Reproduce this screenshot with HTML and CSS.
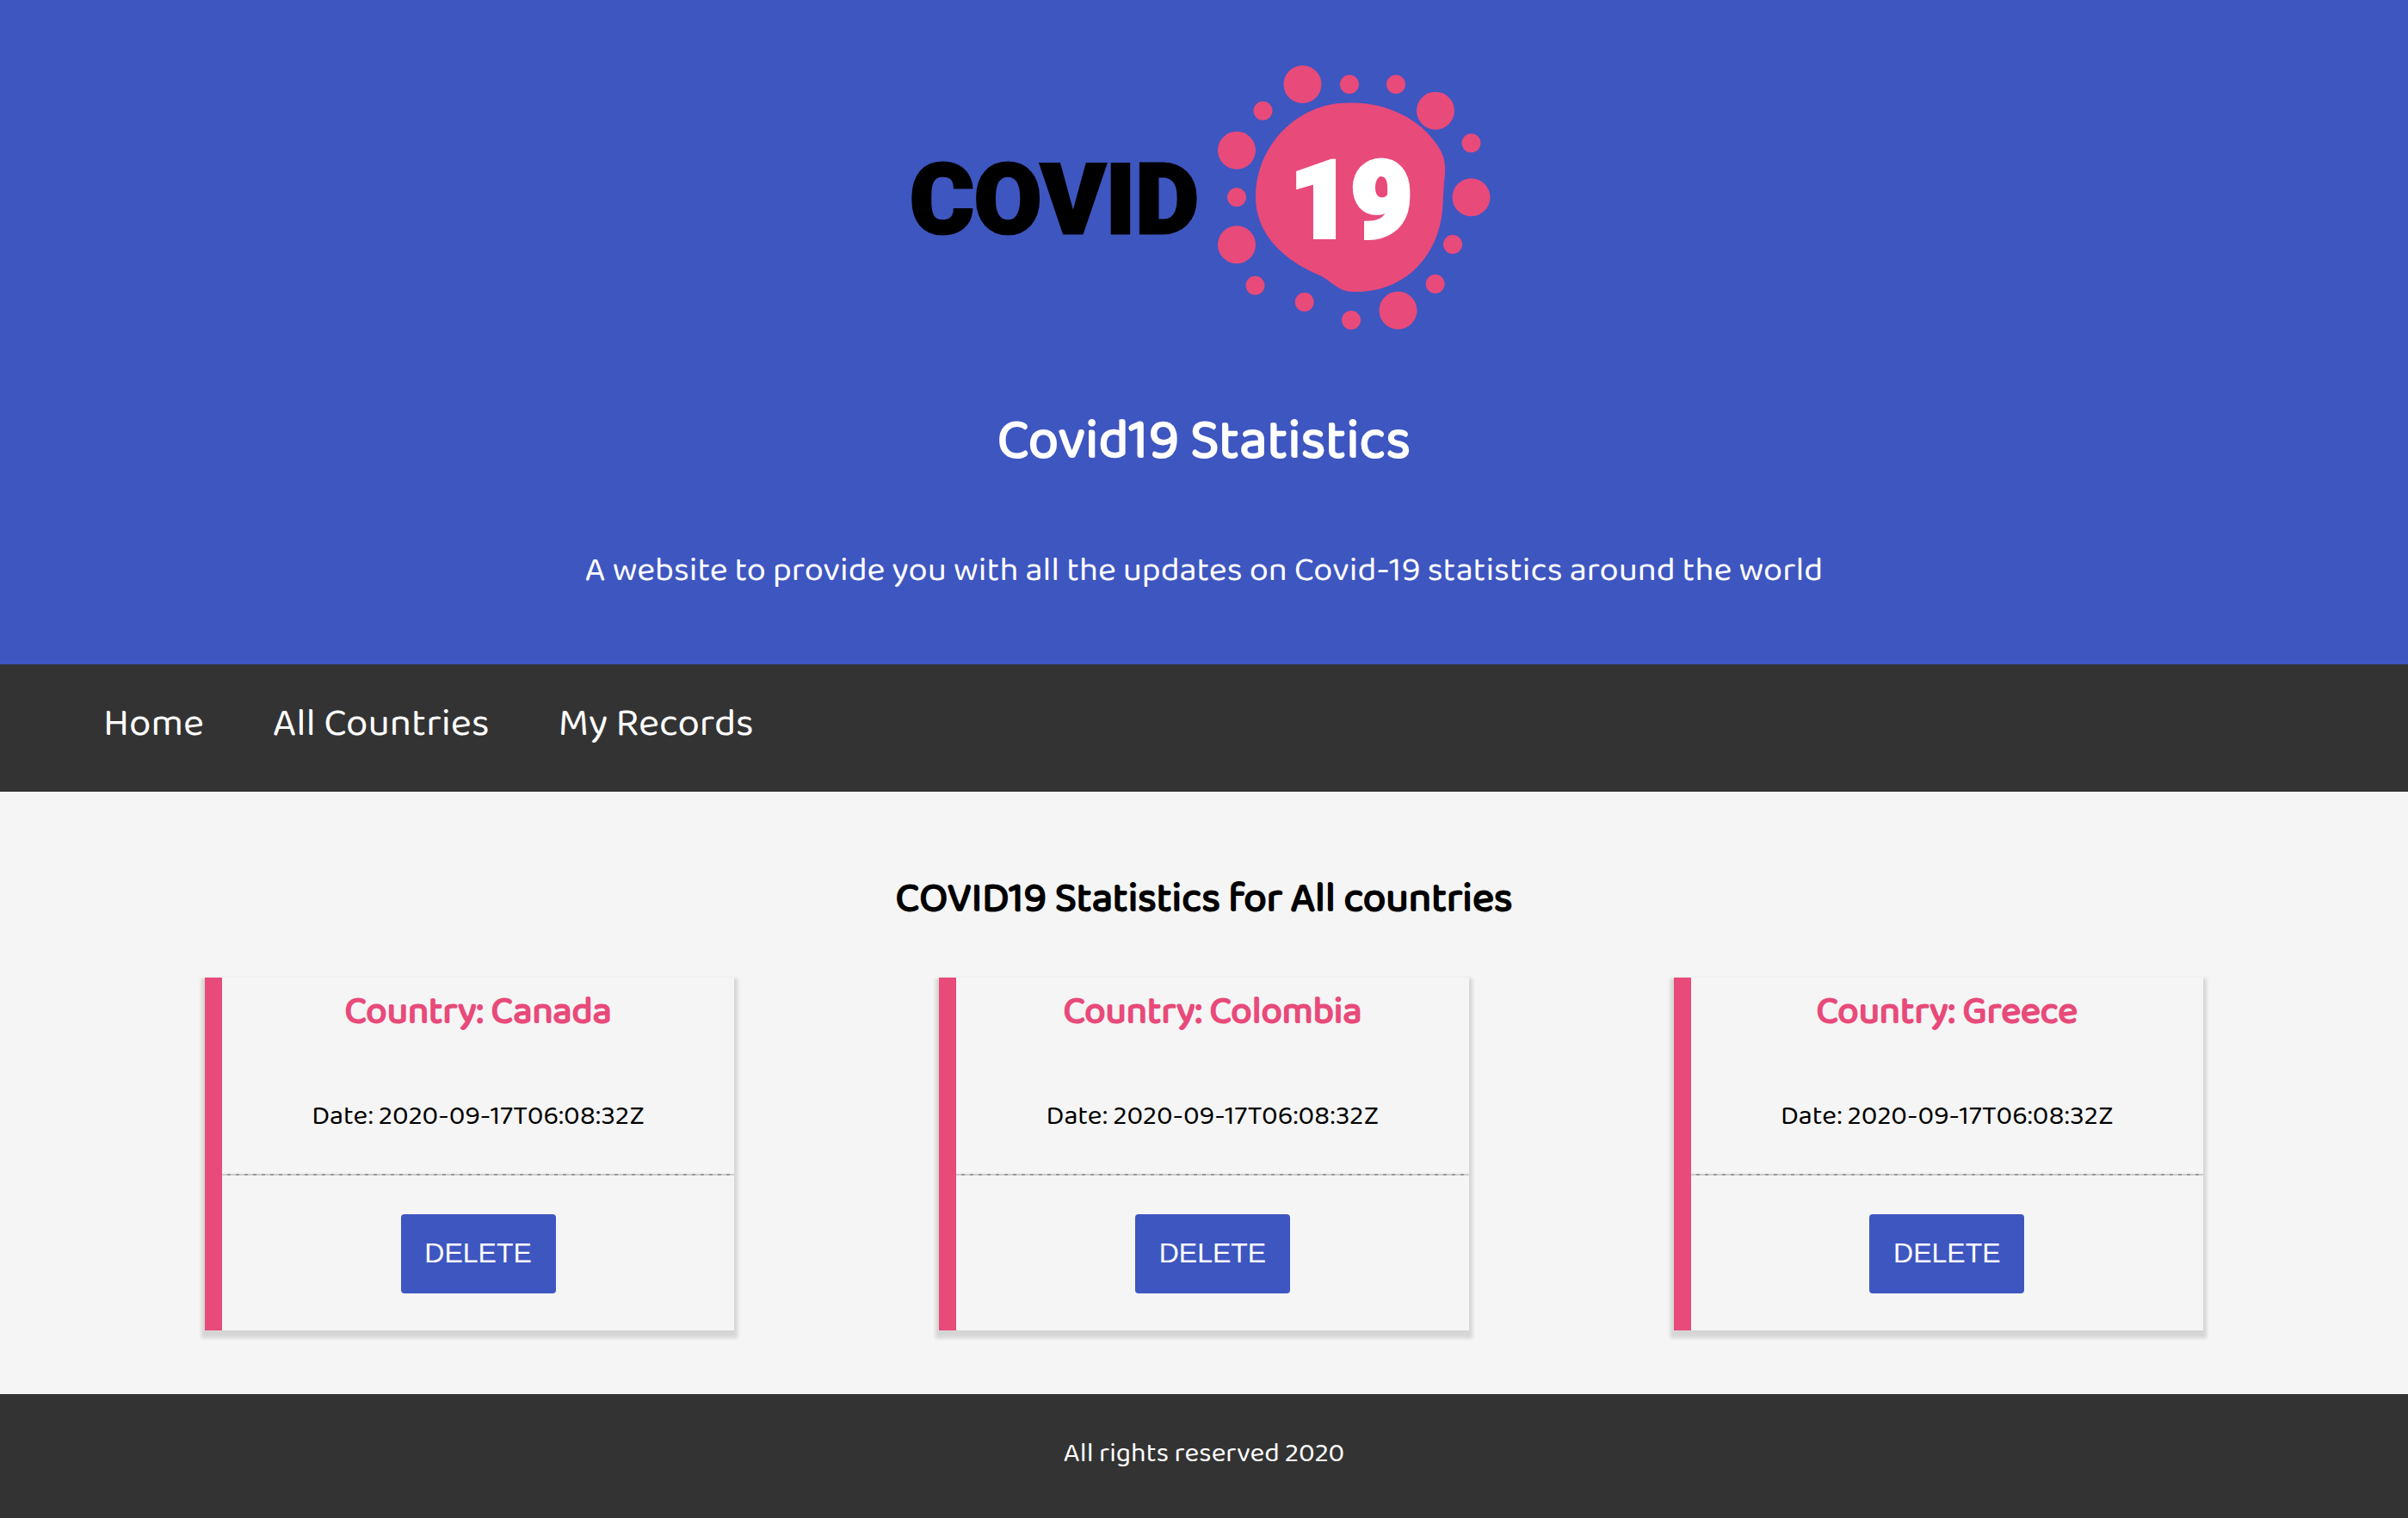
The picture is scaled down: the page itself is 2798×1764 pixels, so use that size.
FILE: index.html
```html
<!DOCTYPE html>
<html lang="en">
<head>
<meta charset="utf-8">
<meta name="viewport" content="width=device-width, initial-scale=1">
<title>Covid19 Statistics</title>
<link rel="stylesheet" href="styles.css">
</head>
<body>
<header class="hero">
  <svg class="logo" viewBox="1041 60 716 340" role="img" aria-label="Covid 19">
    <g class="virus">
      <path d="M1568 119.500C1612 118 1651 140 1669 167C1677 179 1680 186 1679 202C1677 221 1677 229 1676.500 239C1673 300 1629 342 1570 339C1553 338 1547 325 1529 318C1486 299 1459 268 1459 229C1459 169 1507 119 1568 119.500Z"/>
      <circle cx="1513.500" cy="98" r="22"/><circle cx="1668" cy="128.700" r="22"/>
      <circle cx="1437" cy="174.700" r="22"/><circle cx="1709.500" cy="229.300" r="22"/>
      <circle cx="1437" cy="284.300" r="22"/><circle cx="1624.500" cy="360.700" r="22"/>
      <circle cx="1568" cy="98" r="11"/><circle cx="1622" cy="98" r="11"/>
      <circle cx="1467.500" cy="128.700" r="11"/><circle cx="1709.500" cy="166.300" r="11"/>
      <circle cx="1437" cy="229.300" r="11"/><circle cx="1688" cy="284" r="11"/>
      <circle cx="1458.500" cy="331.700" r="11"/><circle cx="1667.700" cy="330" r="11"/>
      <circle cx="1515.800" cy="351" r="11"/><circle cx="1570" cy="372" r="11"/>
    </g>
    <text class="logo-word" x="1225" y="271">COVID</text>
    <text class="logo-number" x="1570" y="275">19</text>
  </svg>
  <h1 class="site-title">Covid19 Statistics</h1>
  <p class="tagline">A website to provide you with all the updates on Covid-19 statistics around the world</p>
</header>
<nav class="menu">
  <a href="#home">Home</a>
  <a href="#countries">All Countries</a>
  <a href="#records">My Records</a>
</nav>
<main class="content">
  <h2 class="section-title">COVID19 Statistics for All countries</h2>
  <div class="cards">
    <article class="card">
      <h3 class="card-title">Country: Canada</h3>
      <p class="card-date">Date: 2020-09-17T06:08:32Z</p>
      <div class="card-actions"><button class="delete" type="button">DELETE</button></div>
    </article>
    <article class="card">
      <h3 class="card-title">Country: Colombia</h3>
      <p class="card-date">Date: 2020-09-17T06:08:32Z</p>
      <div class="card-actions"><button class="delete" type="button">DELETE</button></div>
    </article>
    <article class="card">
      <h3 class="card-title">Country: Greece</h3>
      <p class="card-date">Date: 2020-09-17T06:08:32Z</p>
      <div class="card-actions"><button class="delete" type="button">DELETE</button></div>
    </article>
  </div>
</main>
<footer class="footer"><p>All rights reserved 2020</p></footer>
</body>
</html>
```
FILE: styles.css
```css
:root {
  --blue: #3e56c0;
  --pink: #e84a7a;
  --dark: #333333;
  --light: #f5f5f5;
}

* { box-sizing: border-box; margin: 0; padding: 0; }

body {
  background: var(--light);
  color: #000;
  font-family: "Baloo 2", Lato, sans-serif;
  text-align: center;
}

h1, h2, h3 {
  font-weight: 400;
  -webkit-text-stroke: 2px currentColor;
}

.hero {
  display: flex;
  flex-direction: column;
  align-items: center;
  padding: 60px 40px 77px;
  background: var(--blue);
  color: #fff;
}

.logo { width: 716px; max-width: 100%; height: auto; }
.virus { fill: var(--pink); }

.logo-word,
.logo-number {
  font-family: Roboto, sans-serif;
  font-weight: 900;
  text-anchor: middle;
}

.logo-word { font-size: 114px; stroke: #000; stroke-width: 3px; }
.logo-number { font-size: 122px; fill: #fff; stroke: #fff; stroke-width: 6px; }

.site-title {
  margin-top: 74px;
  font-size: 64px;
  line-height: 80px;
}

.tagline { margin-top: 77px; font-size: 40px; line-height: 64px; }

.menu {
  display: flex;
  flex-wrap: wrap;
  gap: 80px;
  padding: 33px 120px 43px;
  background: var(--dark);
  font-size: 46px;
  line-height: 72px;
}

.menu a { color: #fff; text-decoration: none; }

.content { padding: 88px 0 74px; }

.section-title { font-size: 48px; line-height: 74px; }

.cards {
  display: flex;
  justify-content: space-evenly;
  margin-top: 54px;
}

.card {
  width: 22%;
  padding-top: 6px;
  border-left: 20px solid var(--pink);
  background: var(--light);
  box-shadow: 0 5px 4px 4px rgba(0, 0, 0, 0.13);
}

.card-title {
  color: var(--pink);
  font-size: 44px;
  line-height: 68px;
}

.card-date { margin-top: 62px; font-size: 32px; line-height: 52px; }

.card-actions {
  margin-top: 40px;
  padding: 47px 0 43px;
  background: repeating-linear-gradient(90deg, #cccccc 0 6px, #999999 6px 10px) top / 100% 2px no-repeat;
}

.delete {
  display: block;
  width: 180px;
  height: 92px;
  margin: 0 auto;
  padding-bottom: 2px;
  border: 0;
  border-radius: 4px;
  background: var(--blue);
  color: #fff;
  font-family: "Liberation Sans", Arial, sans-serif;
  font-size: 32px;
}

.footer {
  padding: 44px 40px 48px;
  background: var(--dark);
  color: #fff;
  font-size: 32px;
  line-height: 52px;
}
```
